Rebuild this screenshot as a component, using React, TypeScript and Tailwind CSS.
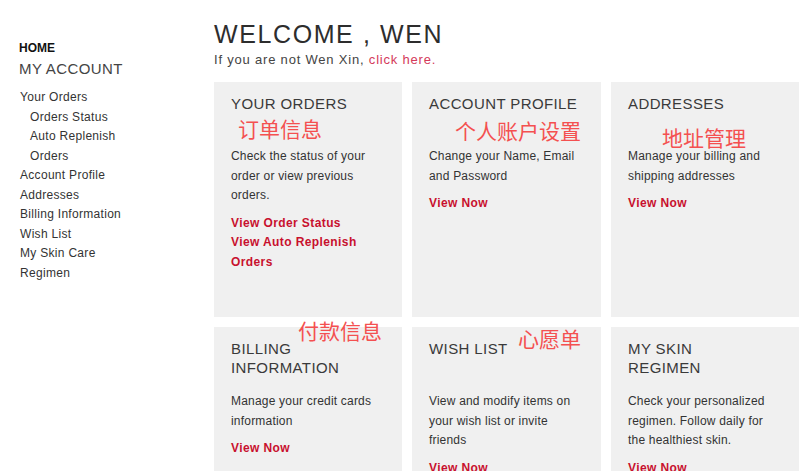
import React from "react";

interface Card {
  title: string[];
  text: string;
  links: string[];
  note?: { text: string; left: string; top: string };
}

const cards: Card[] = [
  {
    title: ["YOUR ORDERS"],
    text: "Check the status of your order or view previous orders.",
    links: ["View Order Status", "View Auto Replenish Orders"],
    note: { text: "订单信息", left: "left-[24px]", top: "top-[36px]" },
  },
  {
    title: ["ACCOUNT PROFILE"],
    text: "Change your Name, Email and Password",
    links: ["View Now"],
    note: { text: "个人账户设置", left: "left-[43px]", top: "top-[38px]" },
  },
  {
    title: ["ADDRESSES"],
    text: "Manage your billing and shipping addresses",
    links: ["View Now"],
    note: { text: "地址管理", left: "left-[51px]", top: "top-[45px]" },
  },
  {
    title: ["BILLING", "INFORMATION"],
    text: "Manage your credit cards information",
    links: ["View Now"],
    note: { text: "付款信息", left: "left-[84px]", top: "top-[-7px]" },
  },
  {
    title: ["WISH LIST"],
    text: "View and modify items on your wish list or invite friends",
    links: ["View Now"],
    note: { text: "心愿单", left: "left-[106px]", top: "top-[1px]" },
  },
  {
    title: ["MY SKIN", "REGIMEN"],
    text: "Check your personalized regimen. Follow daily for the healthiest skin.",
    links: ["View Now"],
  },
];

const sideLinks = [
  { label: "Your Orders", sub: false },
  { label: "Orders Status", sub: true },
  { label: "Auto Replenish", sub: true },
  { label: "Orders", sub: true },
  { label: "Account Profile", sub: false },
  { label: "Addresses", sub: false },
  { label: "Billing Information", sub: false },
  { label: "Wish List", sub: false },
  { label: "My Skin Care", sub: false },
  { label: "Regimen", sub: false },
];

const AccountCard = ({ card }: { card: Card }) => (
  <div className="relative bg-[#f0f0f0] pl-[17px] pr-[20px] pt-[12px] pb-[20px]">
    <h3 className="min-h-[38px] text-[15px] leading-[19px] tracking-[0.4px] text-[#3a3a3a]">
      {card.title.map((t) => (
        <div key={t}>{t}</div>
      ))}
    </h3>
    <p className="mt-[15px] text-[12px] leading-[19.5px] tracking-[0.2px] text-[#333]">
      {card.text}
    </p>
    <div className="mt-[8px] flex flex-col">
      {card.links.map((l) => (
        <a
          key={l}
          className="text-[12px] font-bold leading-[19.5px] tracking-[0.4px] text-[#c8102e]"
        >
          {l}
        </a>
      ))}
    </div>
    {card.note && (
      <span
        className={`absolute ${card.note.left} ${card.note.top} whitespace-nowrap text-[21px] leading-none text-[#f45050] [font-family:'Noto_Sans_CJK_SC',sans-serif]`}
      >
        {card.note.text}
      </span>
    )}
  </div>
);

export default function App() {
  return (
    <div className="flex h-[471px] w-[799px] overflow-hidden bg-white [font-family:'Liberation_Sans',Arial,sans-serif]">
      {/* left nav */}
      <aside className="w-[214px] shrink-0 pl-[19px] pt-[40px]">
        <div className="text-[12px] font-bold leading-[16px] text-[#111]">
          HOME
        </div>
        <div className="mt-[4px] text-[15px] leading-[18px] tracking-[0.4px] text-[#444]">
          MY ACCOUNT
        </div>
        <ul className="mt-[10px]">
          {sideLinks.map((s) => (
            <li
              key={s.label}
              className={`text-[12px] leading-[19.5px] tracking-[0.3px] text-[#333] ${
                s.sub ? "pl-[11px]" : "pl-[1px]"
              }`}
            >
              {s.label}
            </li>
          ))}
        </ul>
      </aside>

      {/* main */}
      <main className="flex-1 pt-[19px]">
        <h1 className="text-[25px] leading-[30px] tracking-[1.6px] text-[#2d2d2d]">
          WELCOME , WEN
        </h1>
        <p className="mt-[2px] text-[13px] leading-[18px] tracking-[0.8px] text-[#444]">
          If you are not Wen Xin,{" "}
          <a className="text-[#d43a5a]">click here.</a>
        </p>
        <div className="mt-[13px] grid grid-cols-[188px_189px_189px] grid-rows-[235px_200px] gap-[10px]">
          {cards.map((c) => (
            <AccountCard key={c.title.join(" ")} card={c} />
          ))}
        </div>
      </main>
    </div>
  );
}
